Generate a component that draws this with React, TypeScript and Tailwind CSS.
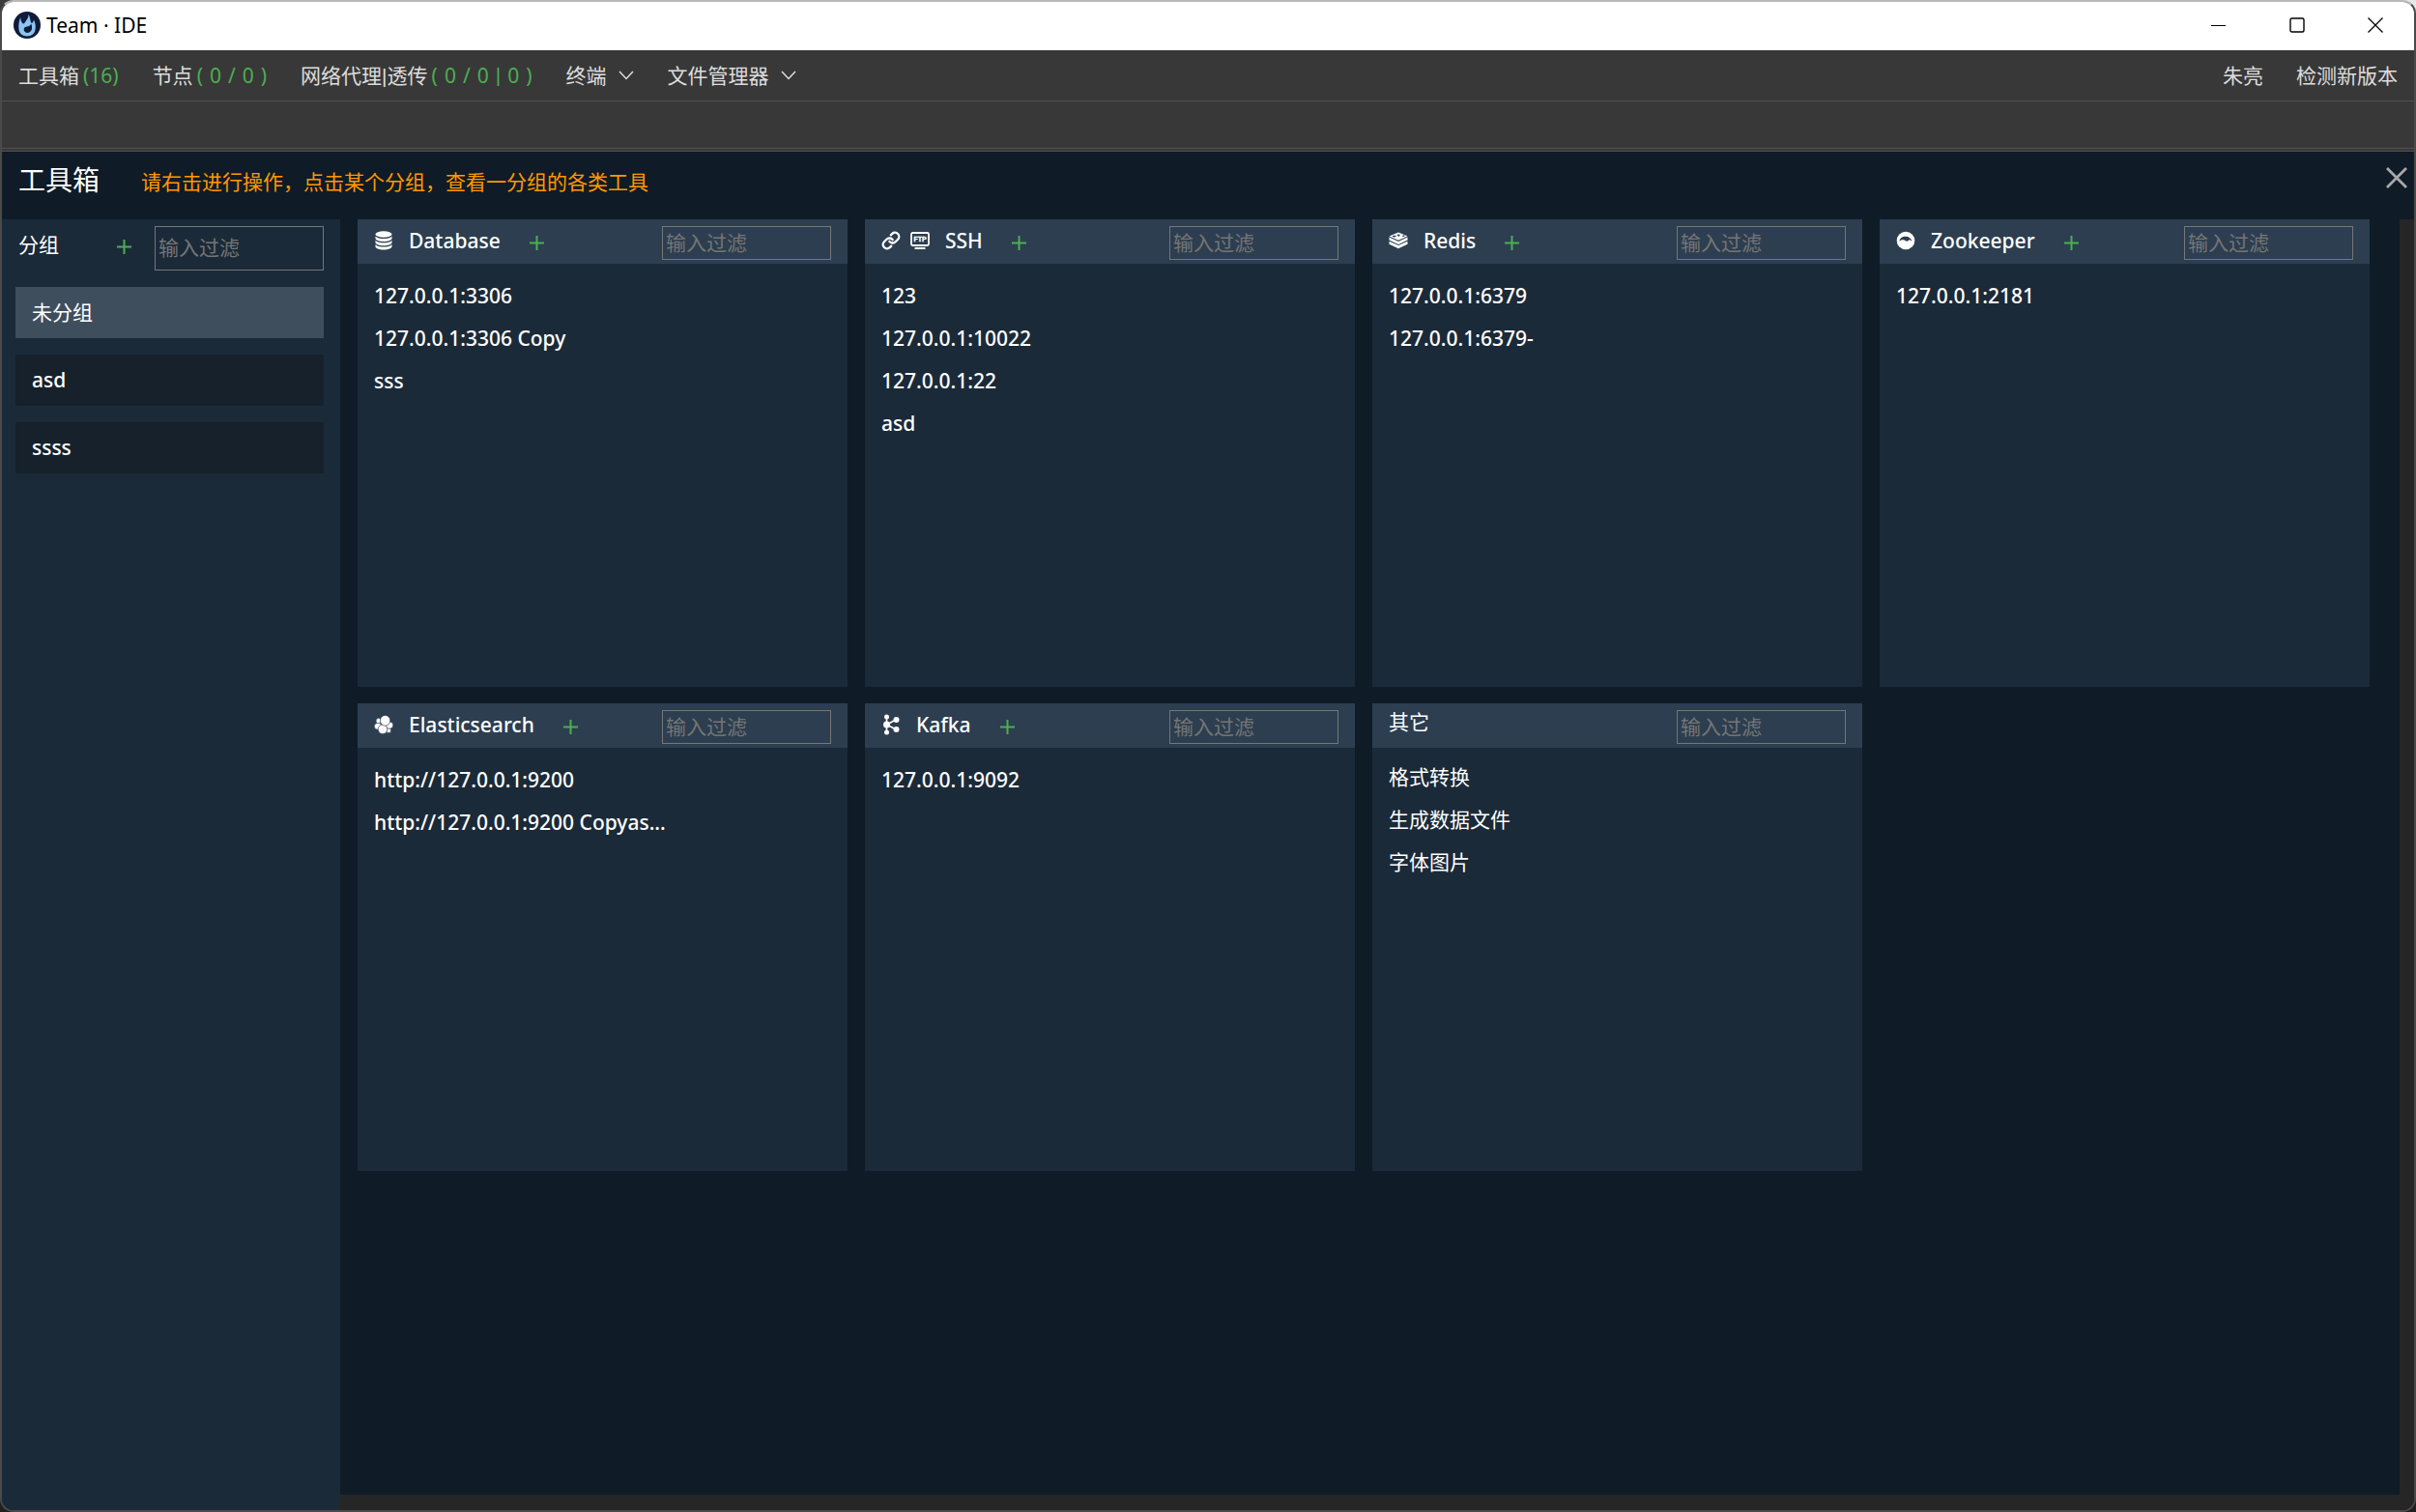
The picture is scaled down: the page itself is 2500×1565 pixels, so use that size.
import type { ReactNode } from "react";
import { Link as LinkIcon } from "lucide-react";

type Card = {
  title: string;
  icons: ReactNode;
  addable: boolean;
  items: string[];
};

function FlameLogo() {
  return (
    <svg viewBox="0 0 28 28" className="size-7" aria-hidden="true">
      <circle cx="14" cy="14" r="14" fill="#0f1b38" />
      <path
        d="M15.500 3c1.800 2.500 1.500 5.500 2.500 8 .5 1.300 1.800 1 2.200-.2l.8-2.300c1.500 3 2 6 1.700 9-.5 5.200-3.900 8-8.700 8s-8.300-2.800-8.600-8C5.100 13.700 5.600 9.500 7.200 6c.2 2.600.8 4.600 2 6 .8.800 1.900.4 2.600-.8C13.500 8.500 15.500 6.500 15.500 3z"
        fill="#8ac4f2"
      />
      <path
        d="M18.200 12.500c1 2.500 1.300 5 .2 7-1.200 2.200-4 3-6 2-2-1.200-2.300-3.800-.7-5.200 1.500-1.200 3.300-.6 4.700-1.500 1-.6 1.500-1.400 1.800-2.300z"
        fill="#0f1b38"
      />
    </svg>
  );
}

function DatabaseIcon() {
  return (
    <svg viewBox="0 0 18 20" className="h-5 w-[18px]" fill="currentColor" aria-hidden="true">
      <ellipse cx="9" cy="3.500" rx="8.500" ry="3.200" />
      <path d="M.5 5.500c1.500 2 5 2.500 8.500 2.500s7-.5 8.500-2.500v2.200c0 1.800-3.800 3.300-8.500 3.300S.5 9.500.5 7.700z" />
      <path d="M.5 9.800c1.500 2 5 2.500 8.500 2.500s7-.5 8.500-2.500v2.200c0 1.800-3.800 3.300-8.500 3.300S.5 13.800.5 12z" />
      <path d="M.5 14c1.500 2 5 2.500 8.500 2.500s7-.5 8.500-2.500v2.200c0 1.800-3.800 3.300-8.500 3.300S.5 18 .5 16.200z" />
    </svg>
  );
}

function FtpIcon() {
  return (
    <svg viewBox="0 0 20 18" className="h-[18px] w-5" aria-hidden="true">
      <rect x="1" y="1" width="18" height="13" rx="1.500" fill="none" stroke="currentColor" strokeWidth="1.800" />
      <path d="M4.500 17h11" stroke="currentColor" strokeWidth="2" />
      <text
        x="10"
        y="10"
        textAnchor="middle"
        fontSize="7"
        fontWeight="bold"
        fill="currentColor"
        stroke="currentColor"
        strokeWidth="0.400"
        fontFamily="Liberation Sans, sans-serif"
      >
        FTP
      </text>
    </svg>
  );
}

function RedisIcon() {
  return (
    <svg viewBox="0 0 20 18" className="h-[18px] w-5" fill="currentColor" aria-hidden="true">
      <path
        fillRule="evenodd"
        d="M10 .5 19.500 4.500 10 8.800.5 4.500zM9.500 2l1 1 1.500-.4-.8 1 1.300.5-1.700.1-.6.8-.7-.9-1.700-.1 1.300-.5zM5.800 3.800c-1.200 0-2 .4-2 .8s.8.800 2 .8 2-.4 2-.8-.8-.8-2-.8zM13.500 4.300l2-1 1.500.9-2 .9z"
      />
      <path d="M.5 5.600 10 9.900l9.500-4.300v3L10 12.900.5 8.600z" />
      <path d="M.5 9.700 10 14l9.500-4.300v3L10 17.200.5 12.700z" />
    </svg>
  );
}

function ZookeeperIcon() {
  return (
    <svg viewBox="0 0 20 20" className="size-5" aria-hidden="true">
      <circle cx="10" cy="10" r="9.300" fill="currentColor" />
      <path
        d="M3.500 10.800c.3-3.200 3-5 6.200-5 3.500 0 6 1.900 6.800 5.300-1-1.300-2-1.800-3-1.800-1 1.600-3 1.900-4.400.5-2.200-.9-4.100-.5-5.600 1z"
        fill="#2c3e50"
      />
    </svg>
  );
}

function ElasticIcon() {
  return (
    <svg
      viewBox="0 0 20 20"
      className="size-5"
      fill="currentColor"
      stroke="#2c3e50"
      strokeWidth="0.700"
      aria-hidden="true"
    >
      <ellipse cx="4.700" cy="6.200" rx="2.600" ry="2.900" />
      <ellipse cx="15.100" cy="15.900" rx="2.600" ry="2.600" />
      <ellipse cx="4.200" cy="11.800" rx="3.900" ry="3.500" />
      <ellipse cx="15.900" cy="10.600" rx="3.900" ry="3.700" />
      <ellipse cx="9" cy="14.800" rx="4.800" ry="4.900" />
      <ellipse cx="11.600" cy="5.800" rx="5.200" ry="5.400" />
    </svg>
  );
}

function KafkaIcon() {
  return (
    <svg viewBox="0 0 20 22" className="h-[22px] w-5" aria-hidden="true">
      <path d="M5.500 3v16M5.500 11l9.500-5M5.500 11l9.500 5" stroke="currentColor" strokeWidth="1.600" />
      <g fill="currentColor">
        <circle cx="5.500" cy="3" r="2.500" />
        <circle cx="5.500" cy="11" r="3.500" />
        <circle cx="5.500" cy="19" r="2.500" />
        <circle cx="15.500" cy="6" r="3" />
        <circle cx="15.500" cy="16" r="3" />
      </g>
    </svg>
  );
}

function ChevronDown() {
  return (
    <svg viewBox="0 0 16 10" className="h-2.5 w-4" fill="none" stroke="currentColor" strokeWidth="1.500" aria-hidden="true">
      <path d="M1 1l7 7.500L15 1" />
    </svg>
  );
}

function PlusIcon() {
  return (
    <svg viewBox="0 0 15 15" className="size-[15px]" fill="none" stroke="currentColor" strokeWidth="2" aria-hidden="true">
      <path d="M7.500 0v15M0 7.500h15" />
    </svg>
  );
}

function Bar() {
  return <span className="font-['Liberation_Sans',sans-serif]">|</span>;
}

const groups = ["未分组", "asd", "ssss"];

const cards: Card[] = [
  { title: "Database", icons: <DatabaseIcon />, addable: true, items: ["127.0.0.1:3306", "127.0.0.1:3306 Copy", "sss"] },
  {
    title: "SSH",
    icons: (
      <>
        <LinkIcon className="size-5" strokeWidth={2.75} />
        <FtpIcon />
      </>
    ),
    addable: true,
    items: ["123", "127.0.0.1:10022", "127.0.0.1:22", "asd"],
  },
  { title: "Redis", icons: <RedisIcon />, addable: true, items: ["127.0.0.1:6379", "127.0.0.1:6379-"] },
  { title: "Zookeeper", icons: <ZookeeperIcon />, addable: true, items: ["127.0.0.1:2181"] },
  {
    title: "Elasticsearch",
    icons: <ElasticIcon />,
    addable: true,
    items: ["http://127.0.0.1:9200", "http://127.0.0.1:9200 Copyas..."],
  },
  { title: "Kafka", icons: <KafkaIcon />, addable: true, items: ["127.0.0.1:9092"] },
  { title: "其它", icons: null, addable: false, items: ["格式转换", "生成数据文件", "字体图片"] },
];

function TitleBar() {
  return (
    <header className="flex h-[50px] shrink-0 items-center bg-white pb-[2px] pl-3 text-black">
      <FlameLogo />
      <h1 className="ml-1.5 grow">Team · IDE</h1>
      <button aria-label="最小化" className="flex h-full w-[81px] items-center justify-center">
        <svg viewBox="0 0 16 16" className="size-4" stroke="currentColor" strokeWidth="1">
          <path d="M0 8.500h15" />
        </svg>
      </button>
      <button aria-label="最大化" className="flex h-full w-[81px] items-center justify-center">
        <svg viewBox="0 0 16 16" className="size-4" fill="none" stroke="currentColor" strokeWidth="1.400">
          <rect x="1" y="1" width="14" height="14" rx="1.500" />
        </svg>
      </button>
      <button aria-label="关闭" className="flex h-full w-[81px] items-center justify-center">
        <svg viewBox="0 0 16 16" className="size-4" stroke="currentColor" strokeWidth="1.300">
          <path d="M.5.5l15 15M15.500.5l-15 15" />
        </svg>
      </button>
    </header>
  );
}

function MenuBar() {
  return (
    <nav className="flex h-[53px] shrink-0 items-center gap-[35px] border-b border-[#505050] bg-[#383838] px-[17px] text-[#dddddd]">
      <button className="flex gap-1">
        工具箱<span className="text-[#4caf50]">(16)</span>
      </button>
      <button className="flex gap-1">
        节点
        <span className="flex gap-[7px] text-[#4caf50]">
          <span>(</span>
          <span>0</span>
          <span>/</span>
          <span>0</span>
          <span>)</span>
        </span>
      </button>
      <button className="flex gap-1">
        <span>
          网络代理
          <Bar />
          透传
        </span>
        <span className="flex gap-[7px] text-[#4caf50]">
          <span>(</span>
          <span>0</span>
          <span>/</span>
          <span>0</span>
          <Bar />
          <span>0</span>
          <span>)</span>
        </span>
      </button>
      <button className="flex items-center gap-3">
        终端
        <ChevronDown />
      </button>
      <button className="flex items-center gap-3">
        文件管理器
        <ChevronDown />
      </button>
      <div className="ml-auto flex gap-[34px]">
        <span>朱亮</span>
        <button>检测新版本</button>
      </div>
    </nav>
  );
}

function Sidebar() {
  return (
    <aside className="w-[350px] shrink-0 bg-[#1b2a38] pt-[7px] pr-[17px] pl-[14px]">
      <div className="mb-[17px] flex items-center">
        <h3 className="mb-2 pl-[3px]">分组</h3>
        <button aria-label="添加分组" className="mb-1 ml-auto text-[#4caf50]">
          <PlusIcon />
        </button>
        <input
          aria-label="过滤分组"
          placeholder="输入过滤"
          className="ml-6 h-[46px] w-[175px] border border-[#767676] bg-transparent px-[3px] pb-[2px] placeholder:text-[#757575]"
        />
      </div>
      <ul className="flex flex-col gap-[17px]">
        {groups.map((group, index) => (
          <li key={group}>
            <button
              className={
                index === 0
                  ? "h-[53px] w-full bg-[#3f4e5d] px-[17px] pb-[2px] text-left"
                  : "h-[53px] w-full bg-[#16212c] px-[17px] pb-px text-left font-medium"
              }
            >
              {group}
            </button>
          </li>
        ))}
      </ul>
    </aside>
  );
}

function ToolCard({ card }: { card: Card }) {
  return (
    <section className="h-[484px] min-w-0 bg-[#1b2a38]">
      <div className="flex h-[46px] items-center bg-[#2c3e50] px-[17px] pt-[3px]">
        {card.icons && <span className="mr-4 flex min-w-5 items-center justify-center gap-2.5 pb-[5px]">{card.icons}</span>}
        <h3 className={card.addable ? "pb-[5px] font-medium" : "pb-[11px]"}>{card.title}</h3>
        {card.addable && (
          <button aria-label={`添加 ${card.title}`} className="ml-[30px] pb-px text-[#4caf50]">
            <PlusIcon />
          </button>
        )}
        <input
          aria-label={`过滤 ${card.title}`}
          placeholder="输入过滤"
          className="ml-auto h-[35px] w-[175px] border border-[#767676] bg-transparent px-[3px] pb-[2px] placeholder:text-[#757575]"
        />
      </div>
      <ul className={card.addable ? "pt-[11px] font-medium" : "pt-2"}>
        {card.items.map((item) => (
          <li key={item}>
            <button className="block h-11 w-full truncate px-[17px] text-left">{item}</button>
          </li>
        ))}
      </ul>
    </section>
  );
}

export default function App() {
  return (
    <div className="h-screen bg-[#231f21] bg-[linear-gradient(to_right,#3c3c3c_98px,#e8e8e8_98px)] bg-[length:100%_42px] bg-no-repeat font-['Noto_Sans','Noto_Sans_CJK_SC',sans-serif] text-[21px] leading-[28px] text-white">
      <div className="flex h-full flex-col overflow-hidden rounded-[14px] border-2 border-[#4a4a4a] border-t-[#b9b9b9] bg-[#0f1b26]">
        <TitleBar />
        <MenuBar />
        <div className="h-[52px] shrink-0 border-b-4 border-double border-[#505050] bg-[#383838]" />
        <div className="flex h-[70px] shrink-0 items-center pr-[7px] pb-1 pl-[17px]">
          <h2 className="pb-2 text-[28px] leading-[36px]">工具箱</h2>
          <p className="ml-[43px] pb-1 text-[#ff9800]">请右击进行操作，点击某个分组，查看一分组的各类工具</p>
          <button aria-label="关闭工具箱" className="mb-3 ml-auto text-[#a9a9a9]">
            <svg viewBox="0 0 22 22" className="size-[22px]" stroke="currentColor" strokeWidth="2.800">
              <path d="M1 1l20 20M21 1L1 21" />
            </svg>
          </button>
        </div>
        <div className="flex min-h-0 grow">
          <Sidebar />
          <main className="min-w-0 grow border-r-[15px] border-b-[16px] border-[#262626] pr-[31px] pl-[18px]">
            <div className="grid grid-cols-4 gap-x-[18px] gap-y-[17px]">
              {cards.map((card) => (
                <ToolCard key={card.title} card={card} />
              ))}
            </div>
          </main>
        </div>
      </div>
    </div>
  );
}
